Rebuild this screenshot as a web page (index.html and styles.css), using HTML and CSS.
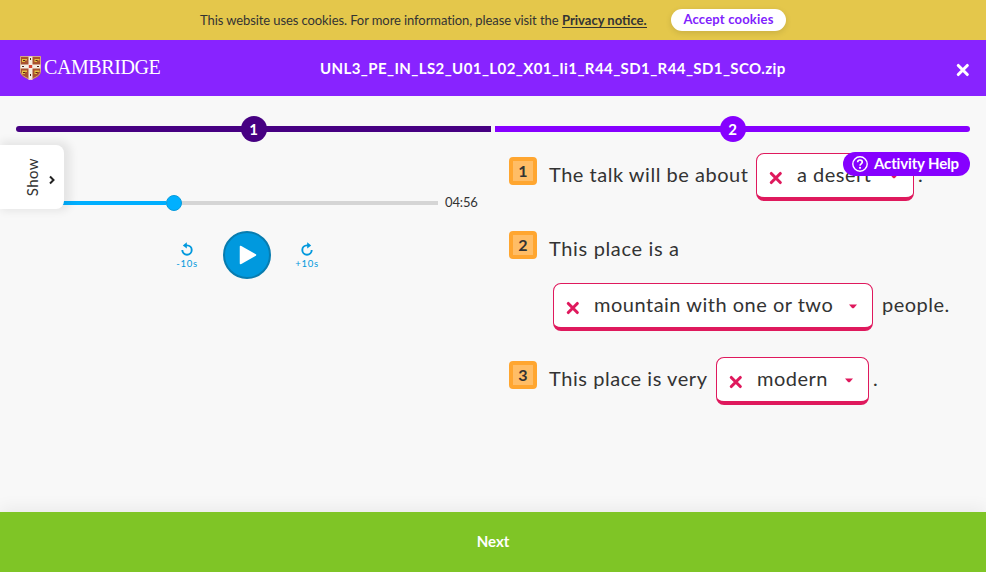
FILE: index.html
```html
<!DOCTYPE html>
<html lang="en">
<head>
<meta charset="utf-8">
<title>Activity</title>
<link rel="stylesheet" href="styles.css">
</head>
<body>
<svg class="defs" aria-hidden="true">
  <symbol id="cross" viewBox="0 0 14 14"><path d="M2.300 2.500 11.300 11.500M11.300 2.500 2.300 11.500" fill="none" stroke="currentColor" stroke-width="3.100" stroke-linecap="round"/></symbol>
  <symbol id="caret" viewBox="0 0 8 5"><path d="M0 .5h8L5.200 3.700Q4 4.800 2.800 3.700Z" fill="currentColor"/></symbol>
</svg>
<div class="cookies">
  <p class="cookies-text"><span class="notice">This website uses cookies. For more information, please visit the </span><a class="privacy">Privacy notice.</a></p>
  <button class="accept">Accept cookies</button>
</div>
<header class="header">
  <div class="brand">
    <svg class="shield" viewBox="0 0 21 24">
      <path d="M0 0h21v15c0 5-5 7-10.500 9C5 22 0 20 0 15Z" fill="#a9512f"/>
      <path d="M8.500 0h4v8.500H21v4h-8.500V24l-2 .5-2-.5V12.500H0v-4h8.500Z" fill="#f5eee5"/>
      <path d="M2 3h5v1.500H5V6H2zM2 14.500h5V16H5v2H2zM14.500 3h5v1.500H17V6h-2.500zM14.500 14.500h5V16H17v2h-2.500z" fill="#e3c044"/>
      <path d="M3 4.500h2M15.500 4.500h2M3 16.500h2M15.500 16.500h2M2 10.500h2M17 10.500h2M10.500 2v2M10.500 18v2" stroke="#512516"/>
      <path d="M8.800 9h3.400v3H8.800z" fill="#d54231"/>
      <path d="M.5.5h20V15c0 4.500-5 6.500-10 8.500C5.500 21.500.5 19.500.5 15Z" fill="none" stroke="#e0bd9d" stroke-width=".8"/>
    </svg>
    <span class="wordmark">CAMBRIDGE</span>
  </div>
  <h1 class="title">UNL3_PE_IN_LS2_U01_L02_X01_Ii1_R44_SD1_R44_SD1_SCO.zip</h1>
  <svg class="close"><use href="#cross"/></svg>
</header>
<main class="main">
  <nav class="steps">
    <div class="step done"><span class="step-line"></span><span class="step-dot">1</span></div>
    <div class="step"><span class="step-line"></span><span class="step-dot">2</span></div>
  </nav>
  <div class="columns">
    <section class="player">
      <div class="timeline"><div class="track"><div class="played"></div><span class="knob"></span></div><span class="time">04:56</span></div>
      <div class="controls">
        <div class="skip"><svg viewBox="0 0 14 14"><path d="M5.200 3.400H7a4.700 4.700 0 1 1-4.700 4.700" fill="none" stroke="currentColor" stroke-width="1.900"/><path d="M2.800 3.400 6.800.2v6.400Z" fill="currentColor"/></svg><span>-10s</span></div>
        <div class="play"><svg viewBox="0 0 18 20"><path d="M1.500 1.500 16.500 10 1.500 18.500Z" fill="#fff" stroke="#fff" stroke-width="1.500" stroke-linejoin="round"/></svg></div>
        <div class="skip"><svg viewBox="0 0 14 14"><path d="M8.800 3.400H7a4.700 4.700 0 1 0 4.700 4.700" fill="none" stroke="currentColor" stroke-width="1.900"/><path d="M11.200 3.400 7.200.2v6.400Z" fill="currentColor"/></svg><span>+10s</span></div>
      </div>
    </section>
    <section class="quiz">
      <div class="question"><span class="number">1</span><span class="words q1">The talk will be about</span><div class="select s1"><svg class="x"><use href="#cross"/></svg><span class="a1">a desert</span><svg class="caret"><use href="#caret"/></svg></div><span class="stop">.</span></div>
      <div class="question second"><span class="number">2</span><span class="words q2">This place is a</span></div>
      <div class="question wrapped"><div class="select s2"><svg class="x"><use href="#cross"/></svg><span class="a2">mountain with one or two</span><svg class="caret"><use href="#caret"/></svg></div><span class="people">people.</span></div>
      <div class="question"><span class="number">3</span><span class="words q3">This place is very</span><div class="select s3"><svg class="x"><use href="#cross"/></svg><span class="a3">modern</span><svg class="caret"><use href="#caret"/></svg></div><span class="stop">.</span></div>
    </section>
  </div>
</main>
<footer class="next">Next</footer>
<div class="show"><span>Show</span><svg viewBox="0 0 8 10"><path d="M2 1.500 5.500 5 2 8.500" fill="none" stroke="#222" stroke-width="2"/></svg></div>
<div class="help"><svg viewBox="0 0 16 16"><circle cx="8" cy="8" r="7.200" fill="none" stroke="#fff" stroke-width="1.400"/><path d="M5.700 6.200C5.700 3.300 10.300 3.300 10.300 6.100 10.300 7.800 8.100 7.800 8 9.600" fill="none" stroke="#fff" stroke-width="1.700"/><circle cx="8" cy="11.800" r="1.100" fill="#fff"/></svg><span>Activity Help</span></div>
</body>
</html>
```
FILE: styles.css
```css
* { box-sizing: border-box; }
body { margin: 0; width: 986px; height: 572px; display: flex; flex-direction: column; position: relative; overflow: hidden; background: #f8f8f8; color: #333; font-family: Lato, "Open Sans", sans-serif; white-space: nowrap; }
.defs { position: absolute; width: 0; height: 0; }
.cookies { height: 40px; background: #e4c74b; display: flex; align-items: center; padding-left: 200px; font-size: 13px; }
.cookies-text { margin: 0; width: 471px; display: flex; line-height: 16px; }
.notice { width: 362px; letter-spacing: -.09px; }
.privacy { font-weight: 700; height: 16px; border-bottom: 1px solid #333; }
.accept { width: 115px; height: 22px; padding: 0 0 2px; border: 0; border-radius: 11px; background: #fff; color: #7f22fd; font: 700 13px Lato, sans-serif; letter-spacing: .2px; box-shadow: 0 2px 6px rgba(0,0,0,.12); }
.header { height: 56px; background: #8823ff; color: #fff; display: flex; align-items: center; padding: 0 16px 0 20px; }
.brand { width: 300px; display: flex; align-items: center; gap: 3px; }
.shield { width: 21px; height: 24px; }
.wordmark { font: 20px/24px "Liberation Serif", serif; letter-spacing: -.42px; margin-top: -2px; }
.title { margin: -1px 0 0; width: 636px; font-size: 15px; font-weight: 700; line-height: 20px; letter-spacing: .42px; }
.close { width: 14px; height: 14px; margin-top: 4px; }
.main { height: 416px; padding: 20px 16px 0; }
.steps { display: flex; gap: 4px; color: #8600ff; }
.step { flex: 1; height: 26px; display: grid; align-items: center; justify-items: center; }
.step.done { color: #460082; }
.step-line { grid-area: 1 / 1; width: 100%; height: 6px; background: currentColor; border-radius: 0 3px 3px 0; }
.done .step-line { border-radius: 3px 0 0 3px; }
.step-dot { grid-area: 1 / 1; width: 26px; height: 26px; border-radius: 50%; background: #8600ff; color: #fff; font-weight: 700; font-size: 15px; line-height: 26px; text-align: center; }
.done .step-dot { background: #460082; }
.columns { display: flex; }
.player { width: 493px; padding-top: 51px; }
.timeline { display: flex; align-items: center; height: 20px; }
.track { width: 422px; height: 4px; background: #d5d5d5; display: flex; align-items: center; }
.played { width: 150px; height: 4px; background: #00afff; }
.knob { width: 16px; height: 16px; border: 1px solid #079bdc; border-radius: 50%; background: #00b0ff; }
.time { margin: -2px 0 0 7px; font-size: 13px; letter-spacing: -.15px; }
.controls { display: flex; align-items: center; justify-content: center; gap: 24px; width: 462px; height: 48px; margin-top: 18px; color: #0098dd; }
.skip { width: 24px; margin-top: 2px; display: flex; flex-direction: column; align-items: center; }
.skip svg { width: 14px; height: 14px; }
.skip span { font-size: 9.5px; line-height: 12px; letter-spacing: .75px; margin-top: 2px; }
.play { width: 48px; height: 48px; border-radius: 50%; border: 2px solid #087caf; background: #0099de; display: flex; align-items: center; justify-content: center; padding-left: 2px; }
.play svg { width: 18px; height: 20px; }
.quiz { padding-top: 11px; font-size: 20px; }
.question { display: flex; align-items: center; height: 48px; margin-bottom: 26px; }
.question.second { margin-bottom: 8px; }
.wrapped { padding-left: 44px; }
.number { width: 28px; height: 28px; margin: -12px 12px 0 0; border: 4px solid #ffa630; border-radius: 4px; background: #ffbd66; font-size: 16px; font-weight: 700; line-height: 20px; text-align: center; }
.words { margin-top: -6px; }
.q1 { width: 207px; letter-spacing: .52px; }
.q2 { letter-spacing: .65px; }
.q3 { width: 167px; letter-spacing: .55px; }
.select { height: 48px; display: flex; align-items: center; border: 1px solid #df195d; border-bottom-width: 4px; border-radius: 8px; background: #fff; padding: 0 15px 0 12px; }
.select span { flex: 1; margin: -3px 0 0 14px; letter-spacing: .5px; }
.x { width: 14px; height: 14px; margin-top: 4px; color: #df195d; }
.caret { width: 8px; height: 5px; margin-top: 1px; color: #df195d; }
.s1 { width: 158px; } .s2 { width: 320px; } .s3 { width: 153px; }
.stop { margin: -6px 0 0 4px; }
.people { margin: -6px 0 0 9px; letter-spacing: .5px; }
.next { height: 60px; background: #7fc526; color: #fff; text-align: center; font-size: 15px; font-weight: 700; line-height: 59px; box-shadow: 0 -4px 16px rgba(0,0,0,.06); }
.show { position: absolute; left: 0; top: 145px; width: 64px; height: 64px; border-radius: 0 8px 8px 0; background: #fff; box-shadow: 4px -1px 8px 3px rgba(0,0,0,.08); display: flex; align-items: center; padding-left: 24px; }
.show span { width: 16px; font-size: 15px; line-height: 16px; writing-mode: vertical-rl; transform: rotate(180deg); text-align: center; letter-spacing: .4px; }
.show svg { width: 8px; height: 10px; margin: 6px 0 0 8px; }
.help { position: absolute; left: 843px; top: 152px; width: 127px; height: 24px; border-radius: 12px; background: #8600ff; color: #fff; display: flex; align-items: center; padding-left: 9px; font-size: 15px; font-weight: 700; letter-spacing: -.15px; }
.help svg { width: 16px; height: 16px; margin-right: 6px; }
.help span { margin-top: -2px; }
```
